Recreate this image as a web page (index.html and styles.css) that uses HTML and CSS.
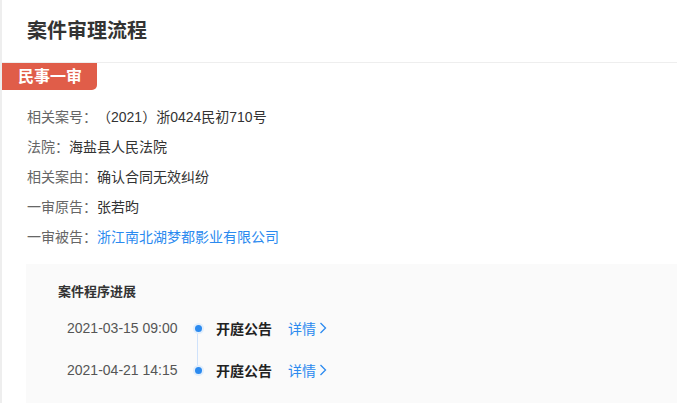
FILE: index.html
```html
<!DOCTYPE html>
<html lang="zh">
<head>
<meta charset="utf-8">
<link rel="stylesheet" href="styles.css">
</head>
<body>
<div class="page">
  <div class="header"><h1 class="title">案件审理流程</h1></div>
  <div class="tag">民事一审</div>
  <div class="info">
    <div class="row"><span class="label">相关案号：</span><span class="value">（2021）浙0424民初710号</span></div>
    <div class="row"><span class="label">法院：</span><span class="value">海盐县人民法院</span></div>
    <div class="row"><span class="label">相关案由：</span><span class="value">确认合同无效纠纷</span></div>
    <div class="row"><span class="label">一审原告：</span><span class="value">张若昀</span></div>
    <div class="row"><span class="label">一审被告：</span><span class="value link">浙江南北湖梦都影业有限公司</span></div>
  </div>
  <div class="progress">
    <div class="progress-title">案件程序进展</div>
    <div class="timeline">
      <div class="step">
        <span class="date">2021-03-15 09:00</span>
        <span class="dot-cell"><span class="dot"></span></span>
        <span class="event">开庭公告</span>
        <span class="detail">详情<svg class="chev" width="8" height="12" viewBox="0 0 8 12"><path d="M1.5 1 L6.5 6 L1.5 11" fill="none" stroke="currentColor" stroke-width="1.3"/></svg></span>
      </div>
      <div class="step">
        <span class="date">2021-04-21 14:15</span>
        <span class="dot-cell"><span class="dot"></span></span>
        <span class="event">开庭公告</span>
        <span class="detail">详情<svg class="chev" width="8" height="12" viewBox="0 0 8 12"><path d="M1.5 1 L6.5 6 L1.5 11" fill="none" stroke="currentColor" stroke-width="1.3"/></svg></span>
      </div>
    </div>
  </div>
</div>
</body>
</html>
```

FILE: styles.css
```css
* { box-sizing: border-box; }
html, body {
  margin: 0;
  padding: 0;
  background: #fff;
  overflow: hidden;
}
body {
  font-family: "Liberation Sans", "Noto Sans CJK SC", sans-serif;
  color: #333;
  width: 677px;
  height: 403px;
  text-spacing-trim: space-all;
}
.page {
  border-left: 2px solid #eeeeee;
  height: 403px;
}
.header {
  height: 63px;
  border-bottom: 1px solid #eeeeee;
  display: flex;
  align-items: center;
  padding-left: 25px;
  padding-bottom: 1px;
}
.title {
  margin: 0;
  font-size: 20px;
  font-weight: bold;
  color: #333;
  line-height: 28px;
}
.tag {
  display: inline-block;
  background: #e05d49;
  color: #fff;
  font-size: 16px;
  font-weight: bold;
  height: 27px;
  line-height: 27px;
  padding: 0 15px 0 16px;
  border-bottom-right-radius: 5px;
}
.info {
  margin-top: 12px;
  padding-left: 25px;
}
.row {
  height: 30px;
  line-height: 30px;
  font-size: 14px;
}
.label { color: #666; }
.value { color: #333; }
.link { color: #2b8aef; }
.progress {
  margin-top: 12px;
  margin-left: 24px;
  background: #fafafa;
  height: 139px;
  padding: 18px 0 0 32px;
}
.progress-title {
  font-size: 13px;
  font-weight: bold;
  line-height: 20px;
  color: #333;
}
.timeline {
  margin-top: 5px;
  padding-left: 9px;
}
.step {
  display: flex;
  align-items: center;
  height: 42px;
  font-size: 14px;
}
.date {
  width: 120px;
  color: #555;
}
.dot-cell {
  width: 22px;
  height: 42px;
  position: relative;
  display: flex;
  align-items: center;
  justify-content: center;
}
.step:first-child .dot-cell::after {
  content: "";
  position: absolute;
  left: 10px;
  top: 21px;
  width: 1px;
  height: 42px;
  background: #cfe2fb;
}
.dot {
  width: 7px;
  height: 7px;
  border-radius: 50%;
  background: #2b8aef;
  box-shadow: 0 0 0 2px #e1eefc;
  position: relative;
  z-index: 1;
}
.event {
  margin-left: 7px;
  width: 72px;
  font-weight: bold;
  color: #222;
}
.detail {
  color: #2b8aef;
  display: inline-flex;
  align-items: center;
}
.chev { margin-left: 3px; }
```
